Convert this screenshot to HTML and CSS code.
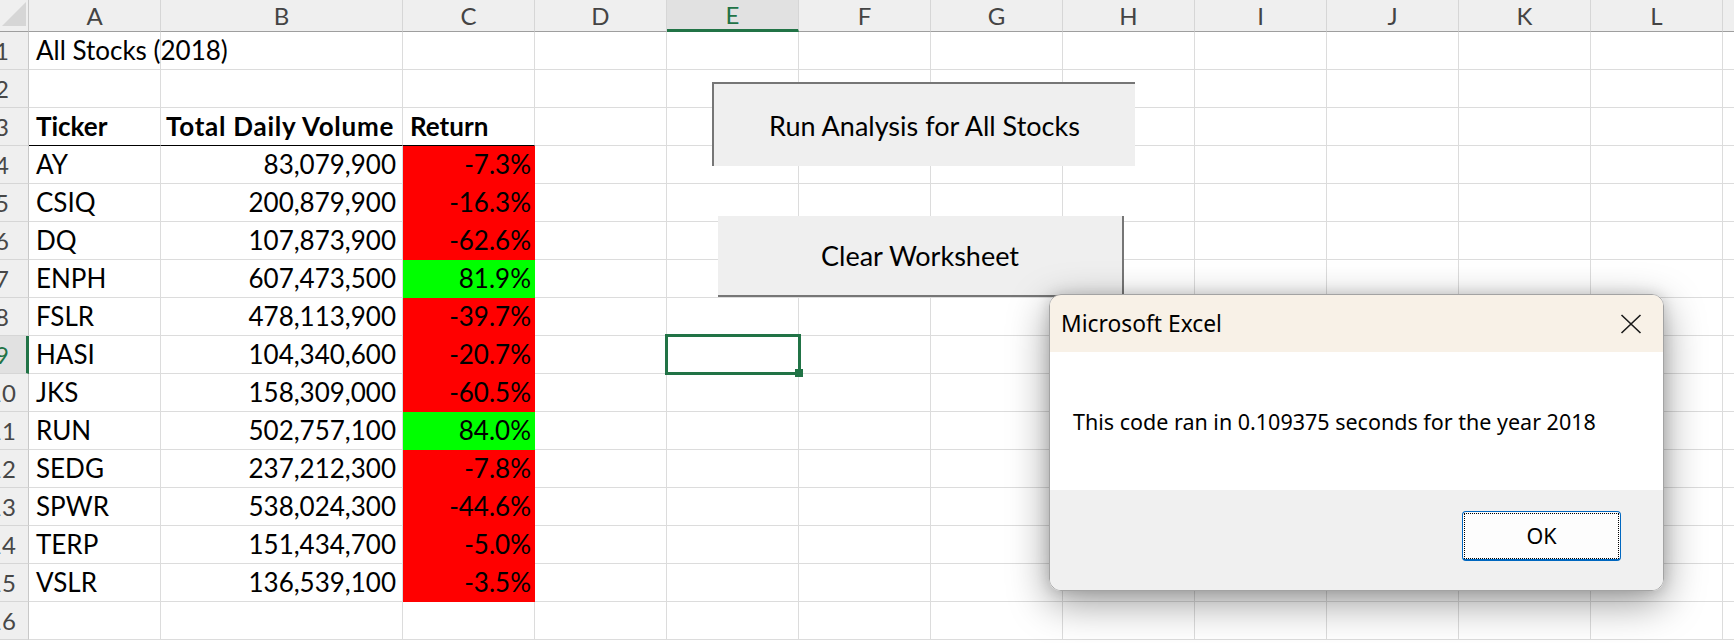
FILE: index.html
```html
<!DOCTYPE html>
<html lang="en">
<head>
<meta charset="utf-8">
<title>All Stocks (2018)</title>
<link rel="stylesheet" href="styles.css">
</head>
<body>
<div class="sheet">
  <div class="hrow">
    <div class="corner"><svg class="tri" width="26" height="26" viewBox="0 0 26 26"><polygon points="2,26 26,26 26,2" fill="#d6d6d6"/></svg></div>
    <div class="ch">A</div><div class="ch">B</div><div class="ch">C</div><div class="ch">D</div><div class="ch sel">E</div><div class="ch">F</div><div class="ch">G</div><div class="ch">H</div><div class="ch">I</div><div class="ch">J</div><div class="ch">K</div><div class="ch">L</div><div class="ch"></div>
  </div>
  <div class="row"><div class="rh"><span>1</span></div><div class="c">All Stocks (2018)</div><div class="c"></div><div class="c"></div><div class="c"></div><div class="c"></div><div class="c"></div><div class="c"></div><div class="c"></div><div class="c"></div><div class="c"></div><div class="c"></div><div class="c"></div><div class="c"></div></div>
  <div class="row"><div class="rh"><span>2</span></div><div class="c"></div><div class="c"></div><div class="c"></div><div class="c"></div><div class="c"></div><div class="c"></div><div class="c"></div><div class="c"></div><div class="c"></div><div class="c"></div><div class="c"></div><div class="c"></div><div class="c"></div></div>
  <div class="row"><div class="rh"><span>3</span></div><div class="c b ul">Ticker</div><div class="c b ul wide">Total Daily Volume</div><div class="c b ul">Return</div><div class="c"></div><div class="c"></div><div class="c"></div><div class="c"></div><div class="c"></div><div class="c"></div><div class="c"></div><div class="c"></div><div class="c"></div><div class="c"></div></div>
  <div class="row"><div class="rh"><span>4</span></div><div class="c">AY</div><div class="c num">83,079,900</div><div class="c num pct red">-7.3%</div><div class="c"></div><div class="c"></div><div class="c"></div><div class="c"></div><div class="c"></div><div class="c"></div><div class="c"></div><div class="c"></div><div class="c"></div><div class="c"></div></div>
  <div class="row"><div class="rh"><span>5</span></div><div class="c">CSIQ</div><div class="c num">200,879,900</div><div class="c num pct red">-16.3%</div><div class="c"></div><div class="c"></div><div class="c"></div><div class="c"></div><div class="c"></div><div class="c"></div><div class="c"></div><div class="c"></div><div class="c"></div><div class="c"></div></div>
  <div class="row"><div class="rh"><span>6</span></div><div class="c">DQ</div><div class="c num">107,873,900</div><div class="c num pct red">-62.6%</div><div class="c"></div><div class="c"></div><div class="c"></div><div class="c"></div><div class="c"></div><div class="c"></div><div class="c"></div><div class="c"></div><div class="c"></div><div class="c"></div></div>
  <div class="row"><div class="rh"><span>7</span></div><div class="c">ENPH</div><div class="c num">607,473,500</div><div class="c num pct grn">81.9%</div><div class="c"></div><div class="c"></div><div class="c"></div><div class="c"></div><div class="c"></div><div class="c"></div><div class="c"></div><div class="c"></div><div class="c"></div><div class="c"></div></div>
  <div class="row"><div class="rh"><span>8</span></div><div class="c">FSLR</div><div class="c num">478,113,900</div><div class="c num pct red">-39.7%</div><div class="c"></div><div class="c"></div><div class="c"></div><div class="c"></div><div class="c"></div><div class="c"></div><div class="c"></div><div class="c"></div><div class="c"></div><div class="c"></div></div>
  <div class="row"><div class="rh sel"><span>9</span></div><div class="c">HASI</div><div class="c num">104,340,600</div><div class="c num pct red">-20.7%</div><div class="c"></div><div class="c"></div><div class="c"></div><div class="c"></div><div class="c"></div><div class="c"></div><div class="c"></div><div class="c"></div><div class="c"></div><div class="c"></div></div>
  <div class="row"><div class="rh"><span>10</span></div><div class="c">JKS</div><div class="c num">158,309,000</div><div class="c num pct red">-60.5%</div><div class="c"></div><div class="c"></div><div class="c"></div><div class="c"></div><div class="c"></div><div class="c"></div><div class="c"></div><div class="c"></div><div class="c"></div><div class="c"></div></div>
  <div class="row"><div class="rh"><span>11</span></div><div class="c">RUN</div><div class="c num">502,757,100</div><div class="c num pct grn">84.0%</div><div class="c"></div><div class="c"></div><div class="c"></div><div class="c"></div><div class="c"></div><div class="c"></div><div class="c"></div><div class="c"></div><div class="c"></div><div class="c"></div></div>
  <div class="row"><div class="rh"><span>12</span></div><div class="c">SEDG</div><div class="c num">237,212,300</div><div class="c num pct red">-7.8%</div><div class="c"></div><div class="c"></div><div class="c"></div><div class="c"></div><div class="c"></div><div class="c"></div><div class="c"></div><div class="c"></div><div class="c"></div><div class="c"></div></div>
  <div class="row"><div class="rh"><span>13</span></div><div class="c">SPWR</div><div class="c num">538,024,300</div><div class="c num pct red">-44.6%</div><div class="c"></div><div class="c"></div><div class="c"></div><div class="c"></div><div class="c"></div><div class="c"></div><div class="c"></div><div class="c"></div><div class="c"></div><div class="c"></div></div>
  <div class="row"><div class="rh"><span>14</span></div><div class="c">TERP</div><div class="c num">151,434,700</div><div class="c num pct red">-5.0%</div><div class="c"></div><div class="c"></div><div class="c"></div><div class="c"></div><div class="c"></div><div class="c"></div><div class="c"></div><div class="c"></div><div class="c"></div><div class="c"></div></div>
  <div class="row"><div class="rh"><span>15</span></div><div class="c">VSLR</div><div class="c num">136,539,100</div><div class="c num pct red">-3.5%</div><div class="c"></div><div class="c"></div><div class="c"></div><div class="c"></div><div class="c"></div><div class="c"></div><div class="c"></div><div class="c"></div><div class="c"></div><div class="c"></div></div>
  <div class="row"><div class="rh"><span>16</span></div><div class="c"></div><div class="c"></div><div class="c"></div><div class="c"></div><div class="c"></div><div class="c"></div><div class="c"></div><div class="c"></div><div class="c"></div><div class="c"></div><div class="c"></div><div class="c"></div><div class="c"></div></div>

  <div class="btn run">Run Analysis for All Stocks</div>
  <div class="btn clear">Clear Worksheet</div>
  <div class="selbox"></div>
  <div class="handle"></div>

  <div class="dlg">
    <div class="dlg-title">
      <span class="dlg-caption">Microsoft Excel</span>
      <svg class="close" width="22" height="20" viewBox="0 0 22 20"><path d="M1.5 1 L20.5 19 M20.5 1 L1.5 19" stroke="#1a1a1a" stroke-width="1.6" fill="none"/></svg>
    </div>
    <div class="dlg-body">This code ran in 0.109375 seconds for the year 2018</div>
    <div class="dlg-foot"><div class="ok">OK</div></div>
  </div>
</div>
</body>
</html>
```
FILE: styles.css
```css
* { box-sizing: border-box; margin: 0; padding: 0; }
body {
  width: 1734px; height: 643px; overflow: hidden; background: #fff;
  font-family: Lato, "Liberation Sans", sans-serif; color: #000;
}
.sheet { position: relative; width: 1734px; height: 643px; overflow: hidden; }
.hrow, .row {
  display: grid;
  grid-template-columns: 29px 132px 242px 132px repeat(10, 132px);
}
.hrow { height: 32px; }
.row { height: 38px; }

.corner {
  position: relative; background: #efefef;
  border-right: 1px solid #c8c8c8; border-bottom: 1px solid #9e9e9e;
}
.tri { position: absolute; left: 0; top: 0; }
.ch {
  background: #efefef; border-right: 1px solid #d6d6d6; border-bottom: 1px solid #9e9e9e;
  text-align: center; font-size: 24px; line-height: 31px; color: #444;
}
.ch.sel { background: #e1e1e1; color: #217346; border-bottom: 3px solid #217346; line-height: 29px; }

.rh {
  background: #efefef; border-right: 1px solid #c8c8c8; border-bottom: 1px solid #d6d6d6;
  overflow: hidden; font-size: 24px; line-height: 37px; color: #474747;
}
.rh span { display: block; width: 56px; margin-left: -26px; text-align: center; }
.rh.sel { background: #e1e1e1; color: #217346; border-right: 3px solid #217346; }

.c {
  border-right: 1px solid #dcdcdc; border-bottom: 1px solid #dcdcdc;
  font-size: 26px; line-height: 37px; padding: 0 6px 0 7px; white-space: nowrap;
}
.num { text-align: right; }
.pct { padding-right: 3px; }
.b { font-weight: 700; }
.wide { letter-spacing: 0.75px; padding-left: 5px; }
.ul { border-bottom-color: #000; }
.red { background: #ff0000; border-color: #ff0000; }
.grn { background: #00ff00; border-color: #00ff00; }

.btn {
  position: absolute; background: #efefef; display: flex; align-items: center;
  justify-content: center; font-size: 27px; color: #000;
}
.run { left: 712px; top: 82px; width: 423px; height: 84px; border-top: 2px solid #767676; border-left: 2px solid #767676; }
.clear { left: 718px; top: 216px; width: 406px; height: 81px; border-right: 2px solid #767676; border-bottom: 2px solid #767676; }

.selbox { position: absolute; left: 665px; top: 334px; width: 136px; height: 41px; border: 3px solid #217346; }
.handle { position: absolute; left: 795px; top: 369px; width: 8px; height: 8px; background: #217346; }

.dlg {
  position: absolute; left: 1049px; top: 294px; width: 615px; height: 297px;
  border: 1px solid #a3a3a3; border-radius: 12px; overflow: hidden;
  display: flex; flex-direction: column;
  box-shadow: 0 12px 40px rgba(0,0,0,0.4), 0 0 14px rgba(0,0,0,0.15);
  font-family: "Noto Sans", "Open Sans", sans-serif; font-size: 21.5px; color: #000;
}
.dlg-title {
  height: 57px; background: #f8f1e7; display: flex; align-items: center;
  justify-content: space-between; padding: 0 21px 0 11px;
}
.dlg-caption { font-size: 22.8px; }
.dlg-body { flex: 1; background: #fff; display: flex; align-items: center; padding-left: 23px; }
.dlg-foot {
  height: 100px; background: #f0f0f0; display: flex; justify-content: flex-end;
  align-items: flex-start; padding: 21px 42px 0 0;
}
.ok {
  position: relative; width: 159px; height: 50px; background: #fdfdfd;
  border: 1px solid #0067c0; border-bottom-width: 2px; border-radius: 4px;
  display: flex; align-items: center; justify-content: center;
}
.ok::after { content: ""; position: absolute; left: 1px; top: 1px; right: 1px; bottom: 0; border: 1px dotted #000; }
```
